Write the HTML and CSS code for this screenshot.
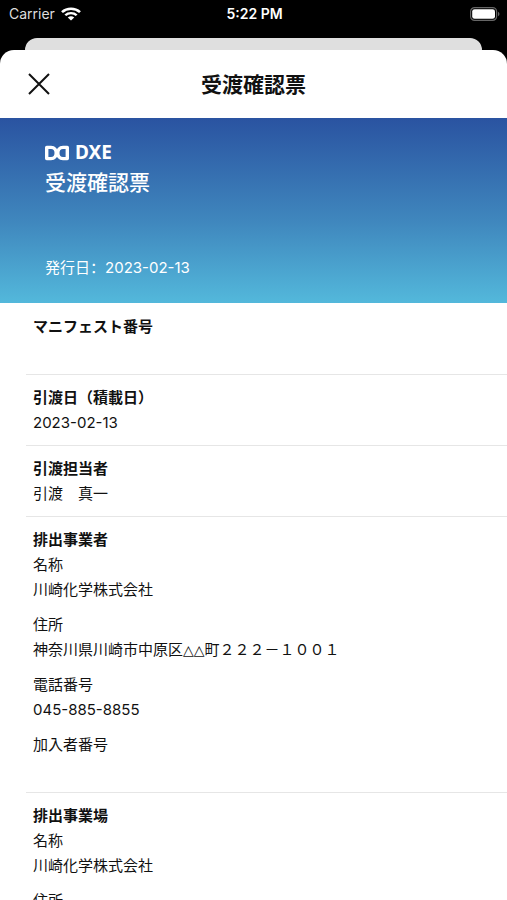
FILE: index.html
```
<!doctype html>
<html lang="ja">
	<head>
		<meta charset="UTF-8" />
		<meta name="viewport" content="width=device-width, initial-scale=1.0" />
		<title>受渡確認票</title>
		<link rel="stylesheet" href="styles.css">
	</head>
	<body>
		<div class="status-bar">
			<div class="carrier">
				<span>Carrier</span>
				<svg width="20" height="14" viewBox="0 0 18 14" preserveAspectRatio="none" aria-hidden="true">
					<g fill="none" stroke="#fff" stroke-width="2.3">
						<path d="M0.9 5.1a11.5 11.5 0 0 1 16.2 0" />
						<path d="M3.9 8.3a7.2 7.2 0 0 1 10.2 0" />
					</g>
					<path d="M9 13.6 6.1 10.6a4.1 4.1 0 0 1 5.8 0z" fill="#fff" />
				</svg>
			</div>
			<div class="clock">5:22 PM</div>
			<div class="battery">
				<svg width="30" height="14" viewBox="0 0 30 14" aria-hidden="true">
					<rect x="0.6" y="0.6" width="26" height="12.8" rx="4" fill="none" stroke="#666" stroke-width="1.2" />
					<rect x="2.2" y="2.2" width="22.8" height="9.6" rx="2.4" fill="#fff" />
					<path d="M28 4.8c2 .8 2 3.6 0 4.4z" fill="#666" />
				</svg>
			</div>
		</div>
		<div class="back-card"></div>

		<main class="sheet">
			<header class="sheet-header">
				<button class="close-button" type="button" aria-label="閉じる">
					<svg width="22" height="22" viewBox="0 0 22 22" aria-hidden="true">
						<path d="M1 1 21 21M21 1 1 21" stroke="#111" stroke-width="2" />
					</svg>
				</button>
				<h1>受渡確認票</h1>
			</header>

			<div class="hero">
				<div class="brand">
					<svg width="24" height="16" viewBox="0 0 24 16" aria-hidden="true">
						<path
							d="M1.7 2.4H6C9.5 2.4 11.2 5 11.2 8S9.5 13.6 6 13.6H1.7ZM22.3 2.4H18C14.5 2.4 12.8 5 12.8 8S14.5 13.6 18 13.6H22.3Z"
							fill="none"
							stroke="#fff"
							stroke-width="3.4"
							stroke-linejoin="round"
						/>
					</svg>
					<span>DXE</span>
				</div>
				<h2>受渡確認票</h2>
				<p class="issued">発行日<span class="colon" lang="zh-CN">：</span>2023-02-13</p>
			</div>

			<div class="sections">
				<section>
					<h3>マニフェスト番号</h3>
					<p></p>
				</section>
				<section>
					<h3>引渡日（積載日）</h3>
					<p>2023-02-13</p>
				</section>
				<section>
					<h3>引渡担当者</h3>
					<p>引渡　真一</p>
				</section>
				<section>
					<h3>排出事業者</h3>
					<dl>
						<div>
							<dt>名称</dt>
							<dd>川崎化学株式会社</dd>
						</div>
						<div>
							<dt>住所</dt>
							<dd>神奈川県川崎市中原区<span class="mark">△△</span>町２２２－１００１</dd>
						</div>
						<div>
							<dt>電話番号</dt>
							<dd>045-885-8855</dd>
						</div>
						<div>
							<dt>加入者番号</dt>
							<dd></dd>
						</div>
					</dl>
				</section>
				<section>
					<h3>排出事業場</h3>
					<dl>
						<div>
							<dt>名称</dt>
							<dd>川崎化学株式会社</dd>
						</div>
						<div>
							<dt>住所</dt>
							<dd></dd>
						</div>
					</dl>
				</section>
			</div>
		</main>
	</body>
</html>
```
FILE: styles.css
```
* {
	box-sizing: border-box;
}
body {
	margin: 0;
	height: 100vh;
	overflow: hidden;
	display: flex;
	flex-direction: column;
	background-color: #000;
	color: #111;
	font-family: Inter, "Noto Sans CJK JP", sans-serif;
	font-size: 15px;
	line-height: 25px;
}
h1,
h2,
h3,
p,
dl,
dd {
	margin: 0;
}

/* status bar */
.status-bar {
	flex: none;
	display: grid;
	grid-template-columns: 1fr auto 1fr;
	align-items: center;
	height: 27px;
	margin-bottom: 11px;
	padding: 0 7px 0 9px;
	color: #fff;
	font-size: 14px;
}
.carrier {
	display: flex;
	align-items: center;
	gap: 6px;
	color: #ddd;
}
.clock {
	font-weight: 600;
}
.battery {
	display: flex;
	justify-content: flex-end;
}

/* sheet */
.back-card {
	flex: none;
	height: 12px;
	margin: 0 25px;
	border-radius: 12px 12px 0 0;
	background-color: #dfdfdf;
}
.sheet {
	flex: 1;
	min-height: 0;
	overflow: hidden;
	border-radius: 14px 14px 0 0;
	background-color: #fff;
}
.sheet-header {
	display: grid;
	grid-template-columns: 50px 1fr 50px;
	align-items: center;
	height: 68px;
	padding: 0 14px;
}
.sheet-header h1 {
	grid-column: 2;
	text-align: center;
	font-size: 21px;
	font-weight: 700;
}
.close-button {
	display: flex;
	justify-content: center;
	padding: 10px 0;
	border: none;
	background: none;
	cursor: pointer;
}

/* hero */
.hero {
	padding: 22px 45px 23px;
	background: linear-gradient(#2a53a1, #3f86bd 55%, #53b8db);
	color: #fff;
}
.brand {
	display: flex;
	align-items: center;
	gap: 6px;
	font: 700 19px/25px "Noto Sans", sans-serif;
}
.hero h2 {
	font-size: 21px;
	font-weight: 500;
	line-height: 36px;
}
.issued {
	margin-top: 54px;
}
.colon {
	font-family: "Noto Sans CJK SC", sans-serif;
	line-height: 1;
}

/* sections */
.sections {
	padding: 1px 0 0 26px;
}
.sections section {
	padding: 10px 7px;
	border-bottom: 1px solid #e6e6e6;
}
.sections h3 {
	font-size: 15px;
	font-weight: 700;
}
.sections p,
.sections dd {
	min-height: 25px;
}
.sections dl {
	display: grid;
	gap: 10px;
}
.mark {
	font-family: "DejaVu Sans", sans-serif;
	font-size: 14px;
	line-height: 1;
}
```
